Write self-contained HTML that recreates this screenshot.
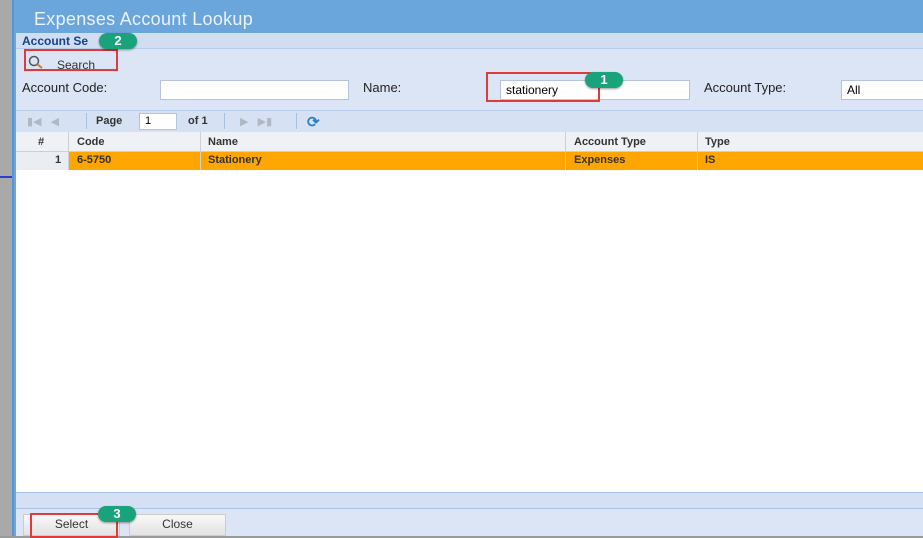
<!DOCTYPE html><html><head><style>
*{margin:0;padding:0;box-sizing:border-box}
body{width:923px;height:536px;overflow:hidden;position:relative;font-family:"Liberation Sans",Verdana,sans-serif;background:#9a9a9a}
.a{position:absolute}
.t{font-size:11px;font-weight:bold;color:#333}
.badge{position:absolute;background:#1aa37a;color:#fff;border-radius:50%;font-size:13px;font-weight:bold;text-align:center;box-shadow:0 1px 2px rgba(0,0,0,.4)}
.red{position:absolute;border:2px solid #e03a3a}
.inp{position:absolute;background:#fff;border:1px solid #b5c4dc;font-size:12px;padding-left:5px;line-height:18px}
.lbl{position:absolute;font-size:13px;color:#222}
</style></head><body>
<div class="a" style="left:0;top:0;width:14px;height:536px;background:#a9a9a9"></div>
<div class="a" style="left:0;top:176px;width:12px;height:2px;background:#2a3fd0"></div>
<div class="a" style="left:12px;top:0;width:911px;height:536px;background:#6aa5dc;border-left:2px solid #5a95cf"></div>
<div class="a" style="left:34px;top:9px;font-size:18px;color:#eaf2fb;letter-spacing:.3px">Expenses Account Lookup</div>
<div class="a" style="left:16px;top:33px;width:907px;height:503px;background:#dbe5f5"></div>
<div class="a" style="left:16px;top:33px;width:907px;height:16px;background:#d1def2;border-bottom:1px solid #b8cbe8"></div>
<div class="a" style="left:22px;top:34px;font-size:12px;font-weight:bold;color:#15428b">Account Se</div>
<div class="a" style="left:28px;top:55px;width:16px;height:16px"><svg width="16" height="16"><circle cx="6" cy="6" r="4.5" fill="none" stroke="#555" stroke-width="1.5"/><line x1="9" y1="9" x2="14" y2="13" stroke="#c97a2a" stroke-width="2"/></svg></div>
<div class="a" style="left:57px;top:58px;font-size:12px;color:#333">Search</div>
<div class="red" style="left:24px;top:49px;width:94px;height:22px"></div>
<div class="lbl" style="left:22px;top:80px">Account Code:</div>
<div class="inp" style="left:160px;top:80px;width:189px;height:20px"></div>
<div class="lbl" style="left:363px;top:80px">Name:</div>
<div class="inp" style="left:500px;top:80px;width:190px;height:20px">stationery</div>
<div class="red" style="left:486px;top:72px;width:114px;height:30px"></div>
<div class="lbl" style="left:704px;top:80px">Account Type:</div>
<div class="inp" style="left:841px;top:80px;width:90px;height:20px">All</div>
<div class="a" style="left:16px;top:110px;width:907px;height:22px;background:#d6e2f4;border-top:1px solid #b8cbe8"></div>
<div class="a" style="left:27px;top:115px;font-size:11px;color:#b0b8c4">▮◀ &nbsp; ◀</div>
<div class="a" style="left:86px;top:113px;width:1px;height:16px;background:#a9bfdc"></div>
<div class="a t" style="left:96px;top:115px;font-weight:bold">Page</div>
<div class="inp" style="left:139px;top:113px;width:38px;height:17px;line-height:15px;font-size:11px">1</div>
<div class="a t" style="left:188px;top:115px">of 1</div>
<div class="a" style="left:224px;top:113px;width:1px;height:16px;background:#a9bfdc"></div>
<div class="a" style="left:240px;top:115px;font-size:11px;color:#b0b8c4">▶ &nbsp; ▶▮</div>
<div class="a" style="left:296px;top:113px;width:1px;height:16px;background:#a9bfdc"></div>
<div class="a" style="left:307px;top:113px;font-size:15px;color:#2a7fd0;font-weight:bold">⟳</div>
<div class="a" style="left:16px;top:132px;width:907px;height:20px;background:#eef1f5;border-bottom:1px solid #d0d0d0"></div>
<div class="a" style="left:16px;top:152px;width:52px;height:18px;background:#eaeef3"></div>
<div class="a" style="left:68px;top:152px;width:855px;height:18px;background:#ffa500"></div>
<div class="a" style="left:16px;top:170px;width:907px;height:322px;background:#fff"></div>
<div class="a" style="left:68px;top:132px;width:1px;height:38px;background:#d0d0d0"></div>
<div class="a" style="left:200px;top:132px;width:1px;height:38px;background:#d0d0d0"></div>
<div class="a" style="left:565px;top:132px;width:1px;height:38px;background:#d0d0d0"></div>
<div class="a" style="left:697px;top:132px;width:1px;height:38px;background:#d0d0d0"></div>
<div class="a t" style="left:38px;top:136px">#</div>
<div class="a t" style="left:77px;top:136px">Code</div>
<div class="a t" style="left:208px;top:136px">Name</div>
<div class="a t" style="left:574px;top:136px">Account Type</div>
<div class="a t" style="left:705px;top:136px">Type</div>
<div class="a t" style="left:55px;top:154px">1</div>
<div class="a t" style="left:77px;top:154px">6-5750</div>
<div class="a t" style="left:208px;top:154px">Stationery</div>
<div class="a t" style="left:574px;top:154px">Expenses</div>
<div class="a t" style="left:705px;top:154px">IS</div>
<div class="a" style="left:16px;top:492px;width:907px;height:17px;background:#d6e0f4;border-top:1px solid #a9c4e8;border-bottom:1px solid #a9c4e8"></div>
<div class="a" style="left:23px;top:514px;width:97px;height:22px;background:linear-gradient(#f8f8f8,#e2e2e2);border:1px solid #ccc;font-size:12px;color:#333;text-align:center;line-height:18px">Select</div>
<div class="a" style="left:129px;top:514px;width:97px;height:22px;background:linear-gradient(#f8f8f8,#e2e2e2);border:1px solid #ccc;font-size:12px;color:#333;text-align:center;line-height:18px">Close</div>
<div class="red" style="left:30px;top:513px;width:88px;height:25px"></div>
<div class="badge" style="left:99px;top:33px;width:38px;height:16px;line-height:16px;border-radius:8px">2</div>
<div class="badge" style="left:585px;top:72px;width:38px;height:16px;line-height:16px;border-radius:8px">1</div>
<div class="badge" style="left:98px;top:506px;width:38px;height:16px;line-height:16px;border-radius:8px">3</div>
</body></html>
